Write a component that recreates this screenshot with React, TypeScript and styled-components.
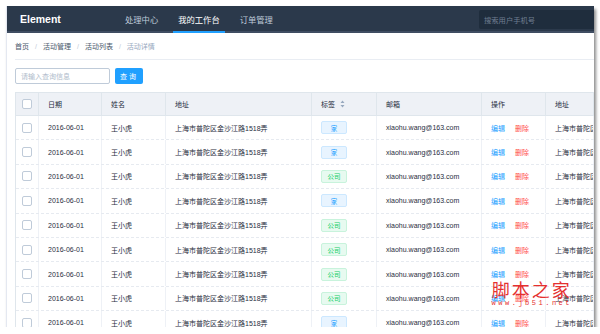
import * as React from "react";
import styled, { createGlobalStyle } from "styled-components";

const Global = createGlobalStyle`
    html, body {
        margin: 0;
        background: #fff;
        font-family: "Liberation Sans", "Noto Sans CJK SC", sans-serif;
    }
`;

const Window = styled.div`
    position: relative;
    margin: 6px 0 0 6px;
    width: 587px;
    height: 321px;
    overflow: hidden;
    background: #fff;
    border-left: 1px solid #e4e8f1;
    box-shadow: 2px 3px 3px rgba(0, 0, 0, 0.45);
`;

const Header = styled.div`
    display: flex;
    align-items: stretch;
    height: 25px;
    background: #2b394b;
    border-bottom: 2px solid #3f4d62;
`;

const Logo = styled.div`
    display: flex;
    align-items: center;
    width: 100px;
    padding-left: 13px;
    color: #fff;
    font-weight: bold;
    font-size: 10.5px;
`;

const Nav = styled.div`
    display: flex;
    flex: 1;
    gap: 10px;
`;

const NavItem = styled.div<{ active?: boolean }>`
    display: flex;
    align-items: center;
    justify-content: center;
    padding: 0 5px;
    margin-bottom: -2px;
    font-size: 8.3px;
    color: ${(p) => (p.active ? "#fff" : "#bfcbd9")};
    border-bottom: 2px solid ${(p) => (p.active ? "#20a0ff" : "transparent")};
`;

const Search = styled.div`
    align-self: center;
    width: 110px;
    height: 19px;
    margin-top: 2px;
    display: flex;
    align-items: center;
    padding-left: 5px;
    background: #1f2d3d;
    border-radius: 2px 0 0 2px;
    color: #6f7e91;
    font-size: 7.3px;
`;

const Body = styled.div`
    padding: 0 0 0 8px;
`;

const Breadcrumb = styled.div`
    display: flex;
    align-items: center;
    height: 26px;
    font-size: 7px;
    color: #48576a;
    border-bottom: 1px solid #e9edf3;
`;

const Crumb = styled.span<{ last?: boolean }>`
    color: ${(p) => (p.last ? "#97a8be" : "#48576a")};
`;

const Sep = styled.span`
    color: #bfcbd9;
    margin: 0 6px;
`;

const Toolbar = styled.div`
    display: flex;
    align-items: center;
    gap: 5px;
    padding: 8px 0;
`;

const Input = styled.div`
    width: 88px;
    height: 14px;
    border: 1px solid #bfcbd9;
    border-radius: 2px;
    display: flex;
    align-items: center;
    padding-left: 5px;
    font-size: 7px;
    color: #b0bccb;
`;

const Button = styled.div`
    width: 28px;
    height: 16px;
    border-radius: 2px;
    background: #20a0ff;
    color: #fff;
    font-size: 7px;
    display: flex;
    align-items: center;
    justify-content: center;
    letter-spacing: 2px;
`;

const Table = styled.div`
    border: 1px solid #dfe6ec;
    border-right: none;
    font-size: 7px;
    color: #1f2d3d;
`;

const cols = "23px 63px 64px 146px 65px 105px 64px minmax(0, 1fr)";

const HeadRow = styled.div`
    display: grid;
    grid-template-columns: ${cols};
    height: 22px;
    background: #eef1f6;
    border-bottom: 1px solid #dfe6ec;
`;

const Row = styled.div`
    display: grid;
    grid-template-columns: ${cols};
    height: 23.4px;
    border-bottom: 1px dashed #e6eaf0;
`;

const Cell = styled.div<{ head?: boolean; center?: boolean }>`
    display: flex;
    align-items: center;
    justify-content: ${(p) => (p.center ? "center" : "flex-start")};
    padding-left: ${(p) => (p.center ? "0" : "9px")};
    border-right: 1px solid ${(p) => (p.head ? "#dfe6ec" : "#eef1f6")};
    white-space: nowrap;
    overflow: hidden;
    color: #1f2d3d;
`;

const Check = styled.span`
    width: 8px;
    height: 8px;
    border: 1px solid #bfcbd9;
    border-radius: 2px;
    background: #fff;
`;

const Tag = styled.span<{ kind: "home" | "company" }>`
    display: inline-flex;
    align-items: center;
    justify-content: center;
    width: 24px;
    height: 11px;
    border-radius: 2px;
    font-size: 6.5px;
    color: ${(p) => (p.kind === "home" ? "#20a0ff" : "#13ce66")};
    background: ${(p) => (p.kind === "home" ? "#e8f4ff" : "#e7faf0")};
    border: 1px solid ${(p) => (p.kind === "home" ? "#cce8ff" : "#c8f3dc")};
`;

const Link = styled.span<{ danger?: boolean }>`
    color: ${(p) => (p.danger ? "#ff4949" : "#20a0ff")};
    margin-right: 10px;
`;

const Sort = styled.svg`
    margin-left: 5px;
`;

const Watermark = styled.div`
    position: absolute;
    right: 22px;
    bottom: 20px;
    display: flex;
    flex-direction: column;
    align-items: center;
    color: #e5302f;
    pointer-events: none;
`;

const WmTitle = styled.div`
    font-family: "Noto Sans CJK SC", sans-serif;
    font-size: 18px;
    letter-spacing: 2px;
    line-height: 20px;
`;

const WmUrl = styled.div`
    font-family: "Liberation Mono", monospace;
    font-size: 7px;
    letter-spacing: 2.5px;
`;

const tags: ("home" | "company")[] = [
    "home", "home", "company", "home", "company", "company", "company", "company", "home",
];

export default function App() {
    return (
        <Window>
            <Global />
            <Header>
                <Logo>Element</Logo>
                <Nav>
                    <NavItem>处理中心</NavItem>
                    <NavItem active>我的工作台</NavItem>
                    <NavItem>订单管理</NavItem>
                </Nav>
                <Search>搜索用户手机号</Search>
            </Header>
            <Body>
                <Breadcrumb>
                    <Crumb>首页</Crumb>
                    <Sep>/</Sep>
                    <Crumb>活动管理</Crumb>
                    <Sep>/</Sep>
                    <Crumb>活动列表</Crumb>
                    <Sep>/</Sep>
                    <Crumb last>活动详情</Crumb>
                </Breadcrumb>
                <Toolbar>
                    <Input>请输入查询信息</Input>
                    <Button>查询</Button>
                </Toolbar>
                <Table>
                    <HeadRow>
                        <Cell head center><Check /></Cell>
                        <Cell head>日期</Cell>
                        <Cell head>姓名</Cell>
                        <Cell head>地址</Cell>
                        <Cell head>
                            标签
                            <Sort width="5" height="8" viewBox="0 0 5 8">
                                <path d="M2.5 0.5 L4.5 3 H0.5 Z M2.5 7.5 L4.5 5 H0.5 Z" fill="#97a8be" />
                            </Sort>
                        </Cell>
                        <Cell head>邮箱</Cell>
                        <Cell head>操作</Cell>
                        <Cell head>地址</Cell>
                    </HeadRow>
                    {tags.map((t, i) => (
                        <Row key={i}>
                            <Cell center><Check /></Cell>
                            <Cell>2016-06-01</Cell>
                            <Cell>王小虎</Cell>
                            <Cell>上海市普陀区金沙江路1518弄</Cell>
                            <Cell>
                                <Tag kind={t}>{t === "home" ? "家" : "公司"}</Tag>
                            </Cell>
                            <Cell>xiaohu.wang@163.com</Cell>
                            <Cell>
                                <Link>编辑</Link>
                                <Link danger>删除</Link>
                            </Cell>
                            <Cell>上海市普陀区金沙江路1518弄</Cell>
                        </Row>
                    ))}
                </Table>
            </Body>
            <Watermark>
                <WmTitle>脚本之家</WmTitle>
                <WmUrl>www.jb51.net</WmUrl>
            </Watermark>
        </Window>
    );
}
